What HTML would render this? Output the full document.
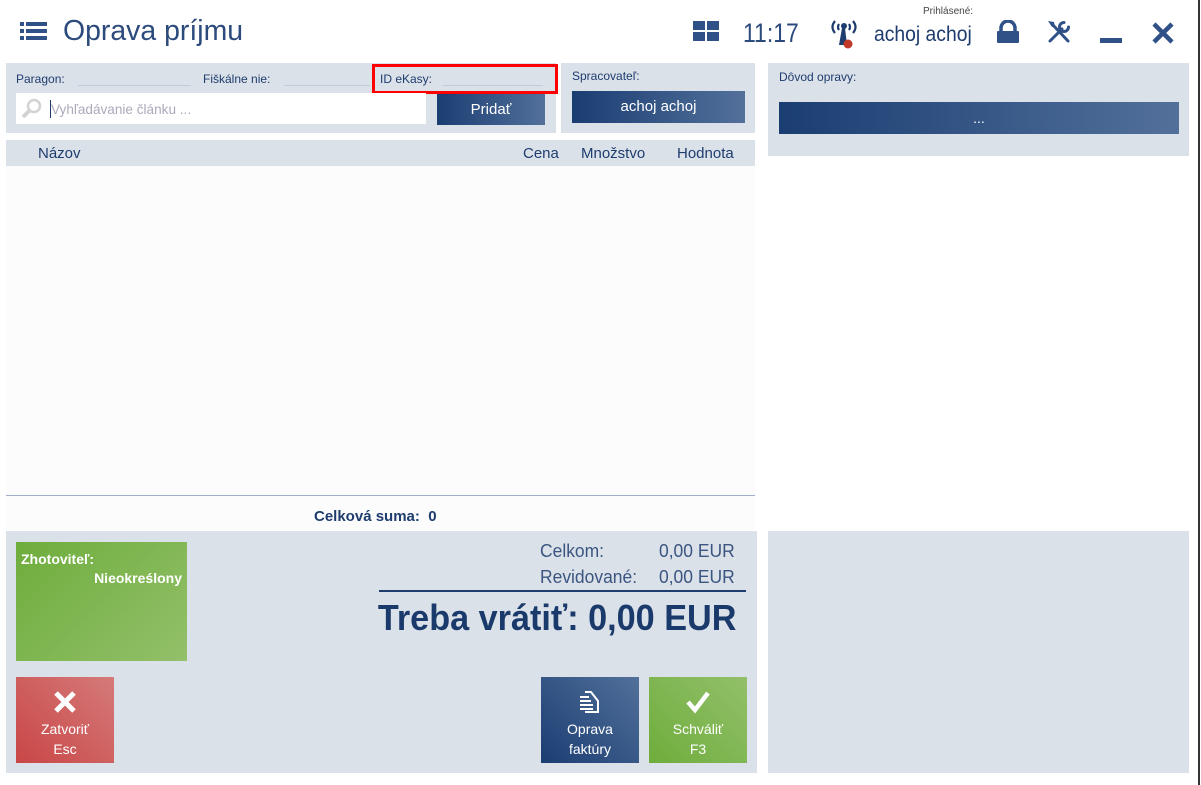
<!DOCTYPE html>
<html><head><meta charset="utf-8"><style>
*{margin:0;padding:0;box-sizing:border-box}
body{width:1201px;height:785px;background:#fff;position:relative;overflow:hidden;font-family:"Liberation Sans",sans-serif;color:#1e3c6e}
.a{position:absolute;white-space:nowrap}
.p{background:#dbe1e9}
.btn{background:linear-gradient(90deg,#1a3d72,#52709a);color:#fff;text-align:center}
.lbl{font-size:12px;color:#1e3c6e}
.ul{border-bottom:1px solid #c3cbd6;height:1px}
.n{transform:scaleX(.88);transform-origin:left}
.m{transform:scaleX(.97);transform-origin:left}
</style></head><body>
<div class="a" style="right:1px;top:0;width:2px;height:785px;background:#333"></div>
<svg class="a" style="left:20px;top:22px" width="27" height="18"><g fill="#2f5188"><rect x="0" y="0" width="4" height="4"/><rect x="6" y="0" width="21" height="4"/><rect x="0" y="7" width="4" height="4"/><rect x="6" y="7" width="21" height="4"/><rect x="0" y="14" width="4" height="4"/><rect x="6" y="14" width="21" height="4"/></g></svg>
<div class="a n" style="left:63px;top:15px;font-size:29px;color:#2c4a7c;transform:scaleX(.98)">Oprava príjmu</div>
<svg class="a" style="left:693px;top:21px" width="27" height="21"><g fill="#2f5188"><rect x="0" y="0" width="12" height="9"/><rect x="14" y="0" width="12" height="9"/><rect x="0" y="11" width="12" height="9"/><rect x="14" y="11" width="12" height="9"/></g></svg>
<div class="a n" style="left:743px;top:18px;font-size:27px;color:#2c4a7c;transform:scaleX(.85)">11:17</div>
<svg class="a" style="left:829px;top:17px" width="30" height="32"><g fill="none" stroke="#1e3c6e" stroke-width="2.2"><path d="M6 4Q1 10 6 16M10 7Q8 10 10 13M24 4Q29 10 24 16M20 7Q22 10 20 13"/></g><circle cx="15" cy="9" r="3" fill="#1e3c6e"/><path d="M13 11L16 11L18 28L10 28Z" fill="#1e3c6e"/><circle cx="19" cy="27" r="4.5" fill="#c0392b"/></svg>
<div class="a" style="left:923px;top:6px;font-size:10px;color:#444">Prihlásené:</div>
<div class="a n" style="left:874px;top:23px;font-size:21px;color:#1e3c6e;transform:scaleX(.92)">achoj achoj</div>
<svg class="a" style="left:996px;top:20px" width="24" height="24"><path d="M5 11V8a7 7 0 0 1 14 0v3" fill="none" stroke="#2f5188" stroke-width="3.5"/><rect x="1" y="11" width="22" height="12" rx="1" fill="#2f5188"/></svg>
<svg class="a" style="left:1047px;top:20px" width="24" height="24"><g stroke="#2f5188" stroke-width="3" fill="none" stroke-linecap="round"><path d="M3 21L15 9"/><path d="M5 4L21 21"/><path d="M17 2.5a4.5 4.5 0 1 0 4.5 4.5"/></g><path d="M1 1l6 1 1 5-3 0z" fill="#2f5188"/></svg>
<div class="a" style="left:1100px;top:38px;width:22px;height:5px;background:#2f5188"></div>
<svg class="a" style="left:1152px;top:22px" width="22" height="22"><path d="M2 2L20 20M20 2L2 20" stroke="#2f5188" stroke-width="4.5"/></svg>
<div class="a p" style="left:6px;top:63px;width:550px;height:70px"></div>
<div class="a lbl" style="left:16px;top:72px">Paragon:</div>
<div class="a ul" style="left:78px;top:85px;width:113px"></div>
<div class="a lbl" style="left:203px;top:72px">Fiškálne nie:</div>
<div class="a ul" style="left:284px;top:85px;width:86px"></div>
<div class="a lbl" style="left:380px;top:72px">ID eKasy:</div>
<div class="a ul" style="left:443px;top:85px;width:100px"></div>
<div class="a" style="left:372px;top:64px;width:186px;height:30px;border:3px solid #f00"></div>
<div class="a" style="left:16px;top:93px;width:410px;height:31px;background:#fff"></div>
<svg class="a" style="left:21px;top:98px" width="22" height="20"><circle cx="13" cy="8" r="6" fill="none" stroke="#d3d3d3" stroke-width="2.5"/><path d="M9 12L2 19" stroke="#d3d3d3" stroke-width="4"/></svg>
<div class="a" style="left:50px;top:100px;width:1px;height:18px;background:#1e3c6e"></div>
<div class="a n" style="left:51px;top:101px;font-size:14px;color:#aab;transform:scaleX(.97)">Vyhľadávanie článku ...</div>
<div class="a btn" style="left:437px;top:94px;width:108px;height:31px;font-size:15px;line-height:31px">Pridať</div>
<div class="a p" style="left:561px;top:63px;width:194px;height:70px"></div>
<div class="a lbl" style="left:572px;top:69px">Spracovateľ:</div>
<div class="a btn" style="left:572px;top:91px;width:173px;height:32px;font-size:15px;line-height:32px">achoj achoj</div>
<div class="a p" style="left:768px;top:63px;width:421px;height:93px"></div>
<div class="a lbl" style="left:779px;top:70px">Dôvod opravy:</div>
<div class="a btn" style="left:779px;top:102px;width:400px;height:32px;font-size:14px;line-height:32px">...</div>
<div class="a p" style="left:768px;top:531px;width:421px;height:242px"></div>
<div class="a p" style="left:6px;top:140px;width:749px;height:26px"></div>
<div class="a" style="left:38px;top:145px;font-size:15px">Názov</div>
<div class="a" style="left:523px;top:145px;font-size:15px">Cena</div>
<div class="a" style="left:581px;top:145px;font-size:15px">Množstvo</div>
<div class="a" style="left:677px;top:145px;font-size:15px">Hodnota</div>
<div class="a" style="left:6px;top:166px;width:749px;height:364px;background:#fcfcfc"></div>
<div class="a" style="left:6px;top:495px;width:749px;height:1px;background:#9fb0c8"></div>
<div class="a" style="left:314px;top:508px;font-size:15px;font-weight:bold">Celková suma:&nbsp; 0</div>
<div class="a p" style="left:6px;top:531px;width:751px;height:242px"></div>
<div class="a" style="left:16px;top:542px;width:171px;height:119px;background:linear-gradient(135deg,#6ead3c,#93c06a);color:#fff;font-weight:bold;font-size:14px">
<div style="position:absolute;left:5px;top:9px">Zhotoviteľ:</div>
<div style="position:absolute;right:5px;top:28px">Nieokreślony</div></div>
<div class="a m" style="left:540px;top:541px;font-size:18px;color:#3a5580">Celkom:</div>
<div class="a m" style="left:659px;top:541px;font-size:18px;color:#3a5580">0,00 EUR</div>
<div class="a m" style="left:540px;top:567px;font-size:18px;color:#3a5580">Revidované:</div>
<div class="a m" style="left:659px;top:567px;font-size:18px;color:#3a5580">0,00 EUR</div>
<div class="a" style="left:379px;top:590px;width:367px;height:2px;background:#1e3c6e"></div>
<div class="a" style="right:465px;top:597px;font-size:36px;font-weight:bold;color:#1a3a6c;transform:scaleX(.95);transform-origin:right">Treba vrátiť: 0,00 EUR</div>
<div class="a" style="left:16px;top:677px;width:98px;height:86px;background:linear-gradient(45deg,#c94646,#d57a7a);color:#fff;text-align:center;font-size:14px">
<svg style="margin-top:13px" width="24" height="24"><path d="M3 3L21 21M21 3L3 21" stroke="#fff" stroke-width="5"/></svg>
<div style="line-height:20px;margin-top:2px">Zatvoriť<br>Esc</div></div>
<div class="a" style="left:541px;top:677px;width:98px;height:86px;background:linear-gradient(45deg,#1a3d72,#52709a);color:#fff;text-align:center;font-size:14px">
<svg style="margin-top:13px" width="22" height="24"><g fill="none" stroke="#fff" stroke-width="2"><path d="M6 2H12L19 11V22H6"/><path d="M1 7H10M1 11H12M1 15H14M1 19H14"/></g></svg>
<div style="line-height:20px;margin-top:2px">Oprava<br>faktúry</div></div>
<div class="a" style="left:649px;top:677px;width:98px;height:86px;background:linear-gradient(45deg,#6ead3c,#93c06a);color:#fff;text-align:center;font-size:14px">
<svg style="margin-top:13px" width="24" height="24"><path d="M2 12L9 20L22 3" fill="none" stroke="#fff" stroke-width="4.5"/></svg>
<div style="line-height:20px;margin-top:2px">Schváliť<br>F3</div></div>
</body></html>
